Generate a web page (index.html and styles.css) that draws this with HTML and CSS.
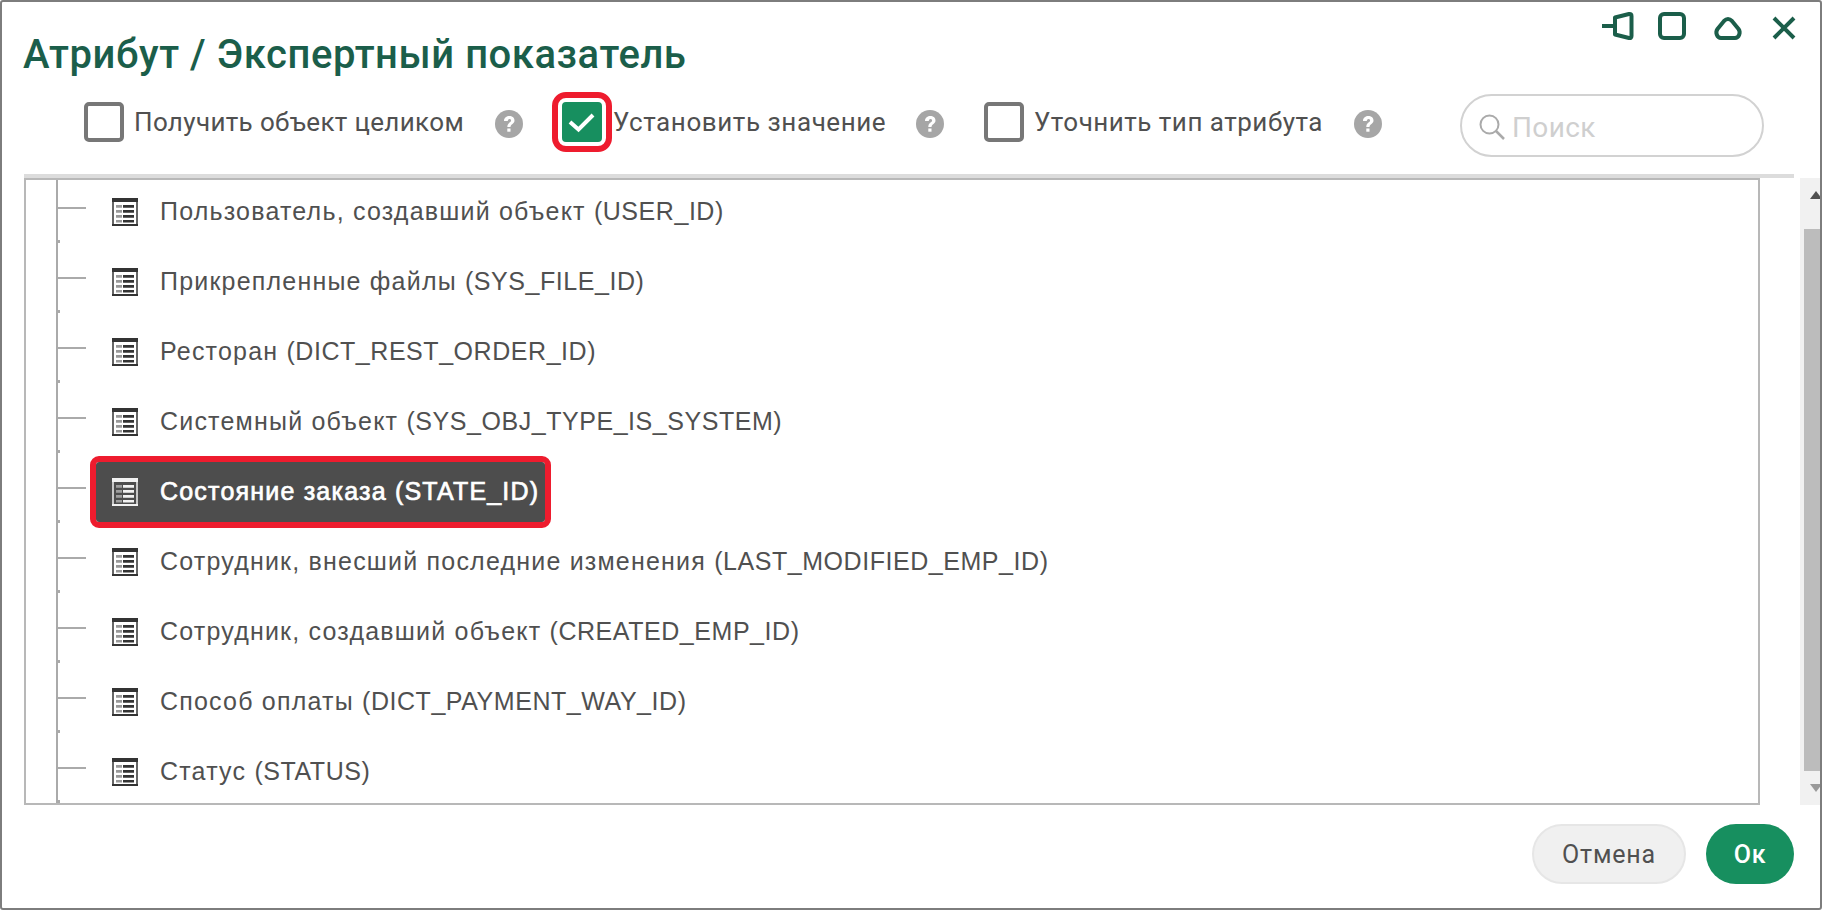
FILE: index.html
```html
<!DOCTYPE html>
<html lang="ru">
<head>
<meta charset="utf-8">
<title>Атрибут / Экспертный показатель</title>
<link rel="stylesheet" href="styles.css">
</head>
<body>
<svg class="defs" width="0" height="0" aria-hidden="true">
  <symbol id="attr" viewBox="0 0 26 28">
    <path d="M1 1h24v26H1z" fill="none" stroke="currentColor" stroke-opacity=".75" stroke-width="2"/>
    <path d="M0 0h26v4H0zM0 26h26v2H0z" fill="currentColor"/>
    <path d="M4 7h6v2.800H4zM4 12h6v2.800H4zM4 17h6v2.800H4zM4 22h6v2.500H4z" fill="currentColor" opacity=".5"/>
    <path d="M11 7h11v2.800H11zM11 12h11v2.800H11zM11 17h11v2.800H11zM11 22h11v2.500H11z" fill="currentColor"/>
  </symbol>
  <symbol id="help" viewBox="0 0 28 28">
    <circle cx="14" cy="14" r="14" fill="#a6a6a6"/>
    <path d="M9 11c0-6.500 10.500-6.500 10.500-.5 0 3.500-4 3.500-4 6.500h-3.200c0-4.500 3.800-4.500 3.800-6.500 0-2.200-3.300-2.200-3.300.5z" fill="#fff"/>
    <rect x="12.300" y="18.500" width="3.200" height="3.200" fill="#fff"/>
  </symbol>
</svg>
<main class="dialog">
  <header class="head">
    <h1 class="title">Атрибут / Экспертный показатель</h1>
    <div class="controls">
      <svg class="ctl" viewBox="0 0 32 32"><path d="M2 16H15M15 7.500 29 4c1.700-.4 2.500.5 2.500 2v20c0 1.500-.8 2.400-2.500 2L15 24.500z" fill="none" stroke="currentColor" stroke-width="4" stroke-linejoin="round"/></svg>
      <svg class="ctl" viewBox="0 0 32 32"><rect x="4" y="4" width="24" height="24" rx="4" fill="none" stroke="currentColor" stroke-width="4"/></svg>
      <svg class="ctl" viewBox="0 0 32 32"><path d="M16 9c2 0 3 1 4 2l6.500 8c2.500 3.500.5 9-3.500 9H9c-4 0-6-5.500-3.500-9l6.500-8c1-1 2-2 4-2z" fill="none" stroke="currentColor" stroke-width="4"/></svg>
      <svg class="ctl" viewBox="0 0 32 32"><path d="M6 8l20 20M26 8 6 28" fill="none" stroke="currentColor" stroke-width="4"/></svg>
    </div>
  </header>
  <div class="toolbar">
    <label class="check">
      <span class="box"></span>
      <span class="check-label">Получить объект целиком</span>
      <svg class="help"><use href="#help"/></svg>
    </label>
    <label class="check">
      <span class="box box-on">
        <svg viewBox="0 0 40 40" class="tick"><path d="M8 20l8.500 7.500L31 13" fill="none" stroke="#fff" stroke-width="4"/></svg>
      </span>
      <span class="check-label">Установить значение</span>
      <svg class="help"><use href="#help"/></svg>
    </label>
    <label class="check">
      <span class="box"></span>
      <span class="check-label">Уточнить тип атрибута</span>
      <svg class="help"><use href="#help"/></svg>
    </label>
    <div class="search">
      <svg class="lens" viewBox="0 0 28 28"><circle cx="11.500" cy="11.500" r="9" fill="none" stroke="#aaa" stroke-width="2"/><path d="M18 18l8 8" stroke="#aaa" stroke-width="2.500"/></svg>
      <span class="search-text">Поиск</span>
    </div>
  </div>
  <div class="rule"></div>
  <div class="content">
    <div class="tree">
      <div class="rows">
        <div class="row"><span class="conn"></span><span class="item"><svg class="attr"><use href="#attr"/></svg><span>Пользователь, создавший объект <span class="code">(USER_ID)</span></span></span></div>
        <div class="row"><span class="conn"></span><span class="item"><svg class="attr"><use href="#attr"/></svg><span>Прикрепленные файлы <span class="code">(SYS_FILE_ID)</span></span></span></div>
        <div class="row"><span class="conn"></span><span class="item"><svg class="attr"><use href="#attr"/></svg><span>Ресторан <span class="code">(DICT_REST_ORDER_ID)</span></span></span></div>
        <div class="row"><span class="conn"></span><span class="item"><svg class="attr"><use href="#attr"/></svg><span>Системный объект <span class="code">(SYS_OBJ_TYPE_IS_SYSTEM)</span></span></span></div>
        <div class="row"><span class="conn"></span><span class="item item-on"><svg class="attr"><use href="#attr"/></svg><span>Состояние заказа (STATE_ID)</span></span></div>
        <div class="row"><span class="conn"></span><span class="item"><svg class="attr"><use href="#attr"/></svg><span>Сотрудник, внесший последние изменения <span class="code">(LAST_MODIFIED_EMP_ID)</span></span></span></div>
        <div class="row"><span class="conn"></span><span class="item"><svg class="attr"><use href="#attr"/></svg><span>Сотрудник, создавший объект <span class="code">(CREATED_EMP_ID)</span></span></span></div>
        <div class="row"><span class="conn"></span><span class="item"><svg class="attr"><use href="#attr"/></svg><span>Способ оплаты <span class="code">(DICT_PAYMENT_WAY_ID)</span></span></span></div>
        <div class="row"><span class="conn"></span><span class="item"><svg class="attr"><use href="#attr"/></svg><span>Статус <span class="code">(STATUS)</span></span></span></div>
      </div>
    </div>
    <div class="scrollbar">
      <span class="arrow arrow-up"></span>
      <span class="thumb"></span>
      <span class="arrow arrow-down"></span>
    </div>
  </div>
  <footer class="foot">
    <button class="btn btn-cancel">Отмена</button>
    <button class="btn btn-ok">Ок</button>
  </footer>
</main>
</body>
</html>
```

FILE: styles.css
```css
html, body { margin: 0; padding: 0; background: #fff; }
body { width: 1822px; height: 910px; overflow: hidden; font-family: Roboto, "Liberation Sans", sans-serif; color: #505050; }
.defs { position: absolute; }
.dialog { box-sizing: border-box; width: 1822px; height: 910px; border: 2px solid #7d7d7d; border-radius: 3px; background: #fff; display: flex; flex-direction: column; }

.head { height: 90px; flex: none; display: flex; justify-content: space-between; align-items: flex-start; padding-left: 21px; padding-right: 20px; }
.title { margin: 30px 0 0; font-size: 40px; line-height: 46px; font-weight: 500; color: #1b5e4a; letter-spacing: .56px; white-space: nowrap; }
.controls { display: flex; gap: 24px; margin-top: 8px; color: #1b5e4a; }
.ctl { width: 32px; height: 32px; display: block; overflow: visible; }

.toolbar { height: 82px; flex: none; display: flex; align-items: flex-start; padding-left: 82px; }
.check { display: flex; align-items: center; height: 40px; margin-top: 10px; font-size: 26px; letter-spacing: .5px; }
.check:nth-child(1) { width: 478px; letter-spacing: .35px; }
.check:nth-child(2) { width: 422px; letter-spacing: .57px; }
.check:nth-child(3) { width: 476px; }
.box { box-sizing: border-box; flex: none; width: 40px; height: 40px; border: 4px solid #777; border-radius: 5px; background: #fff; }
.box-on { background: #178f5f; border-color: #178f5f; outline: 6px solid #ee1c2e; outline-offset: 4px; border-radius: 4px; position: relative; }
.tick { position: absolute; inset: -4px; width: 40px; height: 40px; }
.check-label { margin-left: 10px; white-space: nowrap; }
.check:nth-child(2) .check-label { margin-left: 11px; }
.help { width: 28px; height: 28px; margin: 4px 0 0 31px; flex: none; }
.check:nth-child(2) .help { margin-left: 30px; }
.search { box-sizing: border-box; width: 304px; height: 63px; margin-top: 2px; border: 2px solid #d2d2d2; border-radius: 32px; display: flex; align-items: center; padding: 3px 0 0 16px; gap: 6px; }
.lens { width: 28px; height: 28px; flex: none; }
.search-text { font-size: 28px; color: #cfcfcf; letter-spacing: .4px; }

.rule { height: 4px; flex: none; margin-left: 22px; margin-right: 26px; background: #dcdcdc; }
.content { height: 627px; flex: none; display: flex; margin-left: 22px; }
.tree { box-sizing: border-box; width: 1736px; border: 2px solid #b8b8b8; overflow: hidden; }
.rows { margin-top: -7px; padding-left: 30px; }
.row { height: 70px; display: flex; align-items: center; }
.conn { flex: none; width: 30px; align-self: stretch;
  background:
    linear-gradient(#aaa, #aaa) 0 0 / 2px 100% no-repeat,
    linear-gradient(#aaa, #aaa) 2px 50% / 28px 2px no-repeat,
    linear-gradient(#aaa, #aaa) 2px 100% / 2px 3px no-repeat; }
.item { box-sizing: border-box; display: flex; align-items: center; height: 60px; margin: 8px 0 0 10px; padding: 0 6px 2px 16px; font-family: "Liberation Sans", Arial, sans-serif; font-size: 25px; letter-spacing: 1.2px; color: #505050; white-space: nowrap; }
.code { letter-spacing: .55px; }
.attr { width: 26px; height: 28px; margin: 2px 22px 0 0; color: #333; flex: none; }
.item-on { background: #4d4d4d; color: #fff; -webkit-text-stroke: .7px #fff; border-radius: 3px; outline: 6px solid #ee1c2e; outline-offset: 0; }
.item-on .attr { color: #f2f2f2; }

.scrollbar { width: 20px; margin-left: 40px; background: #f1f1f1; display: flex; flex-direction: column; align-items: flex-end; overflow: hidden; }
.arrow { flex: none; width: 0; height: 0; border-left: 6px solid transparent; border-right: 6px solid transparent; margin: 13px -2px 0 0; }
.arrow-up { border-bottom: 8px solid #505050; }
.arrow-down { border-top: 8px solid #9a9a9a; }
.thumb { flex: none; height: 542px; width: 16px; margin-top: 30px; background: #bcbcbc; }

.foot { flex: 1; display: flex; justify-content: flex-end; align-items: flex-start; gap: 20px; padding: 19px 26px 0 0; }
.btn { font-family: Roboto, "Liberation Sans", sans-serif; font-size: 25px; letter-spacing: .8px; height: 60px; border-radius: 30px; padding: 0; cursor: pointer; }
.btn-cancel { width: 154px; background: #f0f0f0; border: 2px solid #e6e6e6; color: #505050; }
.btn-ok { width: 88px; background: #178f5f; border: 0; color: #fff; font-weight: 500; }
```
